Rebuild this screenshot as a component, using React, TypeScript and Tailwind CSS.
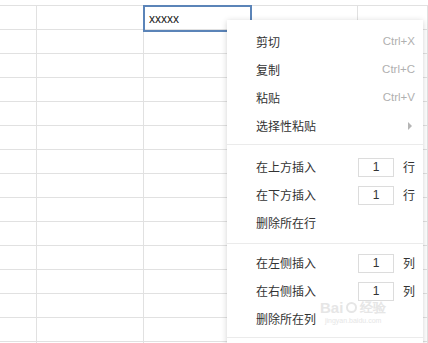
import { ReactNode } from "react";

const cols = [37, 107, 107, 107, 70];
const rowCount = 15;

function Sheet() {
  return (
    <div className="flex flex-col">
      <div className="h-[6px] border-b border-[#e1e1e1]" />
      {Array.from({ length: rowCount }).map((_, r) => (
        <div key={r} className="flex h-[24px] border-b border-[#e1e1e1]">
          {cols.map((w, c) => (
            <div
              key={c}
              style={{ width: w }}
              className="shrink-0 border-r border-[#e1e1e1]"
            />
          ))}
        </div>
      ))}
    </div>
  );
}

function Item({ label, right }: { label: string; right?: ReactNode }) {
  return (
    <div className="flex h-[28px] items-center justify-between pl-[29px] pr-[8px]">
      <span className="text-[12px] text-[#333]">{label}</span>
      {right}
    </div>
  );
}

function Shortcut({ keys }: { keys: string }) {
  return <span className="font-['Liberation_Sans',sans-serif] text-[11.5px] text-[#b0b0b0]">{keys}</span>;
}

function CountInput({ unit }: { unit: string }) {
  return (
    <div className="flex items-center">
      <div className="flex h-[19px] w-[36px] items-center justify-center border border-[#dcdcdc] font-['Liberation_Sans',sans-serif] text-[12px] text-[#333]">
        1
      </div>
      <span className="ml-[9px] text-[12px] text-[#333]">{unit}</span>
    </div>
  );
}

export default function App() {
  return (
    <div className="relative h-[343px] w-[428px] overflow-hidden bg-white font-['Noto_Sans_CJK_SC','Liberation_Sans',sans-serif]">
      <Sheet />

      <div className="absolute left-[143px] top-[5px] flex h-[27px] w-[109px] items-center border-2 border-[#5b84b8] pl-[4px] font-['Liberation_Sans',sans-serif] text-[12px] text-[#222]">
        xxxxx
      </div>

      <div className="absolute left-[227px] top-[20px] w-[196px] bg-white shadow-[0_1px_6px_rgba(0,0,0,0.18)]">
        <div className="border-b border-[#ebebeb] pb-[4px] pt-[8px]">
          <Item label="剪切" right={<Shortcut keys="Ctrl+X" />} />
          <Item label="复制" right={<Shortcut keys="Ctrl+C" />} />
          <Item label="粘贴" right={<Shortcut keys="Ctrl+V" />} />
          <Item
            label="选择性粘贴"
            right={
              <span className="mr-[3px] h-0 w-0 border-y-[4px] border-l-[4px] border-y-transparent border-l-[#b5b5b5]" />
            }
          />
        </div>
        <div className="border-b border-[#ebebeb] pb-[6px] pt-[8px]">
          <Item label="在上方插入" right={<CountInput unit="行" />} />
          <Item label="在下方插入" right={<CountInput unit="行" />} />
          <Item label="删除所在行" />
        </div>
        <div className="border-b border-[#ebebeb] pb-[4px] pt-[5px]">
          <Item label="在左侧插入" right={<CountInput unit="列" />} />
          <Item label="在右侧插入" right={<CountInput unit="列" />} />
          <Item label="删除所在列" />
        </div>
        <div className="h-[20px]" />
      </div>

      <div className="pointer-events-none absolute left-[320px] top-[300px] flex flex-col items-center text-[#e6e6e6]">
        <div className="flex items-center gap-[3px] font-['Liberation_Sans',sans-serif] text-[15px] font-bold leading-none">
          <span>Bai</span>
          <span className="h-[11px] w-[11px] rounded-full border-2 border-[#e6e6e6]" />
          <span className="text-[13px]">经验</span>
        </div>
        <span className="mt-[2px] font-['Liberation_Sans',sans-serif] text-[7px] leading-none">jingyan.baidu.com</span>
      </div>
    </div>
  );
}
